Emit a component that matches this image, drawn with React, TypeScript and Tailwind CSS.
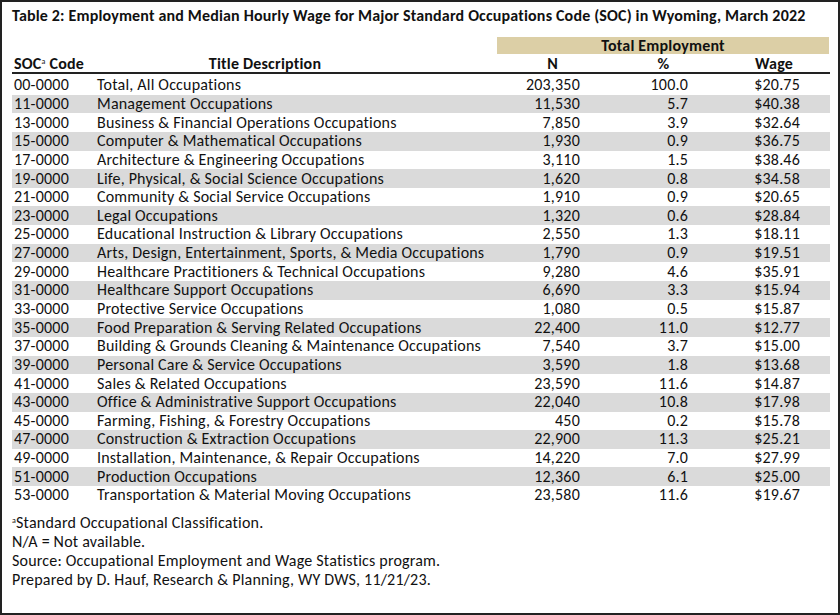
const rows: [string, string, string, string, string][] = [
  ["00-0000", "Total, All Occupations", "203,350", "100.0", "$20.75"],
  ["11-0000", "Management Occupations", "11,530", "5.7", "$40.38"],
  ["13-0000", "Business & Financial Operations Occupations", "7,850", "3.9", "$32.64"],
  ["15-0000", "Computer & Mathematical Occupations", "1,930", "0.9", "$36.75"],
  ["17-0000", "Architecture & Engineering Occupations", "3,110", "1.5", "$38.46"],
  ["19-0000", "Life, Physical, & Social Science Occupations", "1,620", "0.8", "$34.58"],
  ["21-0000", "Community & Social Service Occupations", "1,910", "0.9", "$20.65"],
  ["23-0000", "Legal Occupations", "1,320", "0.6", "$28.84"],
  ["25-0000", "Educational Instruction & Library Occupations", "2,550", "1.3", "$18.11"],
  ["27-0000", "Arts, Design, Entertainment, Sports, & Media Occupations", "1,790", "0.9", "$19.51"],
  ["29-0000", "Healthcare Practitioners & Technical Occupations", "9,280", "4.6", "$35.91"],
  ["31-0000", "Healthcare Support Occupations", "6,690", "3.3", "$15.94"],
  ["33-0000", "Protective Service Occupations", "1,080", "0.5", "$15.87"],
  ["35-0000", "Food Preparation & Serving Related Occupations", "22,400", "11.0", "$12.77"],
  ["37-0000", "Building & Grounds Cleaning & Maintenance Occupations", "7,540", "3.7", "$15.00"],
  ["39-0000", "Personal Care & Service Occupations", "3,590", "1.8", "$13.68"],
  ["41-0000", "Sales & Related Occupations", "23,590", "11.6", "$14.87"],
  ["43-0000", "Office & Administrative Support Occupations", "22,040", "10.8", "$17.98"],
  ["45-0000", "Farming, Fishing, & Forestry Occupations", "450", "0.2", "$15.78"],
  ["47-0000", "Construction & Extraction Occupations", "22,900", "11.3", "$25.21"],
  ["49-0000", "Installation, Maintenance, & Repair Occupations", "14,220", "7.0", "$27.99"],
  ["51-0000", "Production Occupations", "12,360", "6.1", "$25.00"],
  ["53-0000", "Transportation & Material Moving Occupations", "23,580", "11.6", "$19.67"],
];

const cols = "grid grid-cols-[85px_400px_111px_111px_110px]";

export default function App() {
  return (
    <div
      className="w-[840px] h-[615px] bg-white border-2 border-[#222] text-[#111] text-[16px] leading-none tracking-[0.2px]"
      style={{ fontFamily: "Carlito, Calibri, Lato, sans-serif" }}
    >
      <div className="pl-[10px] pr-[8px]">
        <h1 className="font-bold pt-[6px] h-[35px] leading-[16px] tracking-[0.17px]">
          Table 2: Employment and Median Hourly Wage for Major Standard Occupations Code (SOC) in Wyoming, March 2022
        </h1>

        <div className={cols}>
          <div className="col-span-2" />
          <div className="col-span-3 bg-[#dccfa6] h-[17px] flex items-center justify-center font-bold">
            Total Employment
          </div>
        </div>

        <div className={`${cols} font-bold h-[20px] pt-[2px] items-center border-b-2 border-[#222]`}>
          <div className="pl-[2px] flex items-start">
            SOC<span className="text-[8px] leading-none mt-[1px] font-normal">a</span>
            <span className="ml-[4px]">Code</span>
          </div>
          <div className="text-center pr-[64px]">Title Description</div>
          <div className="text-center">N</div>
          <div className="text-center">%</div>
          <div className="text-center">Wage</div>
        </div>

        <div className="pt-[2px]">
          {rows.map((r, i) => (
            <div
              key={r[0]}
              className={`${cols} h-[18.65px] items-center ${i % 2 === 1 ? "bg-[#dadada]" : ""}`}
            >
              <div className="pl-[2px]">{r[0]}</div>
              <div>{r[1]}</div>
              <div className="text-right pr-[28px]">{r[2]}</div>
              <div className="text-right pr-[31px]">{r[3]}</div>
              <div className="text-right pr-[29px]">{r[4]}</div>
            </div>
          ))}
        </div>

        <div className="pt-[8px] leading-[19px]">
          <p className="flex items-start">
            <span className="text-[8px] leading-none mt-[3px]">a</span>
            <span>Standard Occupational Classification.</span>
          </p>
          <p>N/A = Not available.</p>
          <p>Source: Occupational Employment and Wage Statistics program.</p>
          <p>Prepared by D. Hauf, Research &amp; Planning, WY DWS, 11/21/23.</p>
        </div>
      </div>
    </div>
  );
}
